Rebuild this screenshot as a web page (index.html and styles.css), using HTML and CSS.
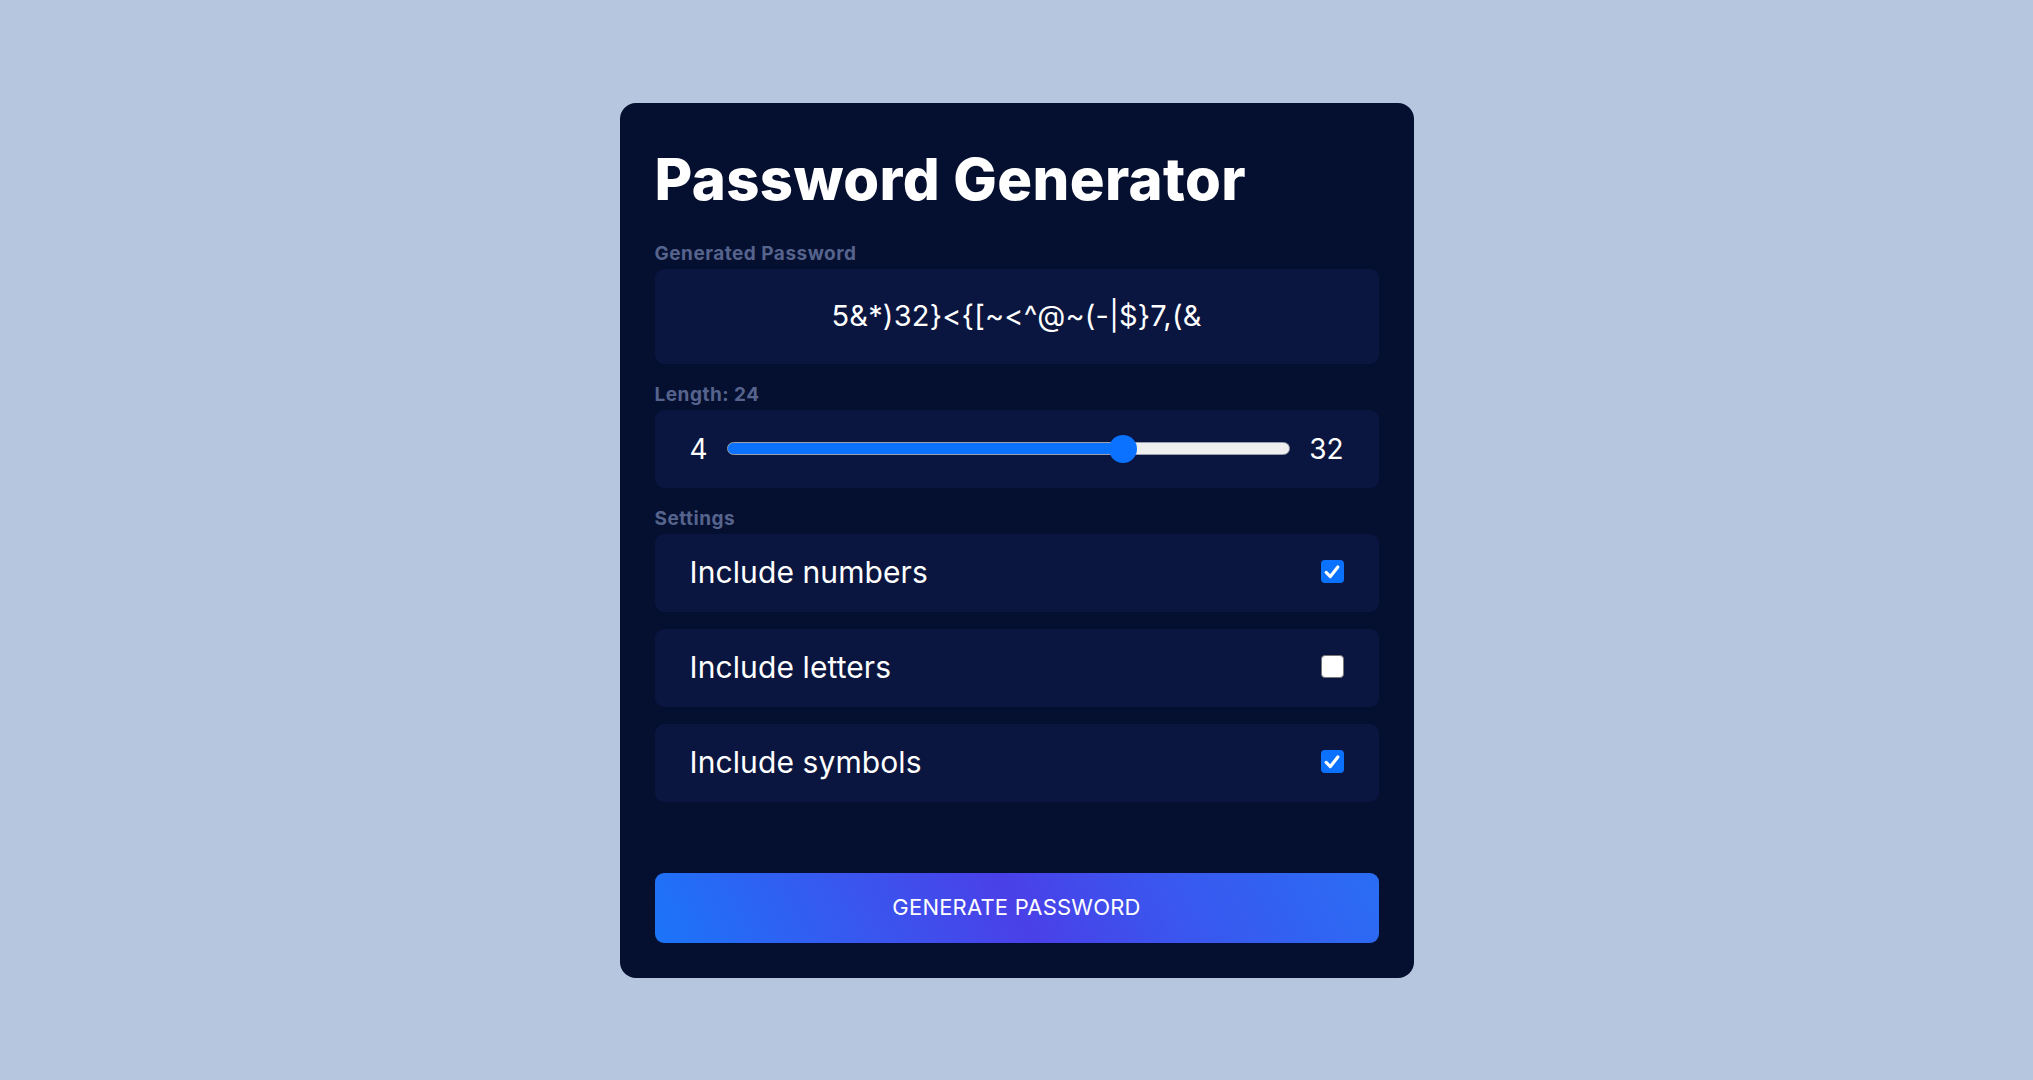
FILE: index.html
```html
<!DOCTYPE html>
<html lang="en">
<head>
<meta charset="utf-8">
<title>Password Generator</title>
<link rel="stylesheet" href="styles.css">
</head>
<body>
<main class="page">
  <section class="card">
    <h1 class="title">Password Generator</h1>

    <div class="group">
      <div class="label">Generated Password</div>
      <div class="box pw-box"><span class="pw">5&amp;*)32}&lt;{[~&lt;^@~(-|$}7,(&amp;</span></div>
    </div>

    <div class="group">
      <div class="label">Length: 24</div>
      <div class="box slider-box">
        <span class="num">4</span>
        <input class="range" type="range" min="4" max="32" value="24" style="--fill: 70.5%">
        <span class="num">32</span>
      </div>
    </div>

    <div class="group">
      <div class="label">Settings</div>
      <div class="options">
        <label class="box option">
          <span class="opt-text">Include numbers</span>
          <span class="check on"><svg viewBox="0 0 24 24" width="20" height="20"><path d="M5 12.5 L10 17.5 L19 6" fill="none" stroke="#fff" stroke-width="3.8" stroke-linecap="round" stroke-linejoin="round"/></svg></span>
        </label>
        <label class="box option">
          <span class="opt-text">Include letters</span>
          <span class="check off"></span>
        </label>
        <label class="box option">
          <span class="opt-text">Include symbols</span>
          <span class="check on"><svg viewBox="0 0 24 24" width="20" height="20"><path d="M5 12.5 L10 17.5 L19 6" fill="none" stroke="#fff" stroke-width="3.8" stroke-linecap="round" stroke-linejoin="round"/></svg></span>
        </label>
      </div>
    </div>

    <button class="gen-btn" type="button">GENERATE PASSWORD</button>
  </section>
</main>
</body>
</html>
```

FILE: styles.css
```css
* { box-sizing: border-box; }

html, body {
  margin: 0;
  padding: 0;
  height: 100%;
}

body {
  background: #b6c6de;
  font-family: "Inter", "Noto Sans", sans-serif;
  color: #ffffff;
}

.page {
  height: 100%;
  display: flex;
  align-items: center;
  justify-content: center;
}

.card {
  width: 794px;
  height: 875px;
  background: #050f30;
  border-radius: 16px;
  padding: 48px 35px 35px;
  display: flex;
  flex-direction: column;
}

.title {
  margin: 0;
  font-size: 58px;
  line-height: 57px;
  font-weight: 800;
  letter-spacing: 0.4px;
}

.group {
  display: flex;
  flex-direction: column;
}

.group:nth-of-type(1) { margin-top: 35px; }
.group + .group { margin-top: 20px; }

.label {
  font-size: 19px;
  line-height: 22px;
  font-weight: 700;
  color: #56648d;
  margin-bottom: 4px;
  letter-spacing: 0.5px;
}

.box {
  background: #0a1640;
  border-radius: 9px;
}

.pw-box {
  height: 95px;
  display: flex;
  align-items: center;
  justify-content: center;
  padding-bottom: 2px;
}

.pw {
  font-size: 29px;
  font-weight: 400;
  letter-spacing: 0.2px;
}

.slider-box {
  height: 78px;
  display: flex;
  align-items: center;
  padding: 0 35px;
  gap: 19px;
}

.num {
  font-size: 28px;
  font-weight: 400;
}

.range {
  -webkit-appearance: none;
  appearance: none;
  flex: 1;
  margin: 0;
  height: 28px;
  background: transparent;
}

.range::-webkit-slider-runnable-track {
  height: 13px;
  border-radius: 7px;
  border: 1px solid #9aa0ad;
  background: linear-gradient(to right, #0a72ff 0, #0a72ff var(--fill), #efefef var(--fill), #efefef 100%);
}

.range::-webkit-slider-thumb {
  -webkit-appearance: none;
  appearance: none;
  width: 28px;
  height: 28px;
  border-radius: 50%;
  background: #0a72ff;
  border: none;
  margin-top: -8.5px;
}

.options {
  display: flex;
  flex-direction: column;
  gap: 17px;
}

.option {
  height: 78px;
  display: flex;
  align-items: center;
  justify-content: space-between;
  padding: 0 35px 2px;
}

.opt-text {
  font-size: 30px;
  font-weight: 400;
  letter-spacing: 0.1px;
}

.check {
  width: 23px;
  height: 23px;
  border-radius: 4px;
  display: flex;
  align-items: center;
  justify-content: center;
}

.check.on { background: #0a72ff; }

.check.off {
  background: #ffffff;
  border: 1px solid #767676;
}

.gen-btn {
  margin-top: auto;
  height: 70px;
  width: 100%;
  border: none;
  border-radius: 9px;
  padding-bottom: 2px;
  background: linear-gradient(62deg, #1b75f8 0%, #3a55ee 30%, #4a40e8 50%, #3a56ee 70%, #2a6df4 100%);
  color: #ffffff;
  font-family: "Inter", "Noto Sans", sans-serif;
  font-size: 22px;
  font-weight: 400;
  letter-spacing: 0.2px;
}
```
